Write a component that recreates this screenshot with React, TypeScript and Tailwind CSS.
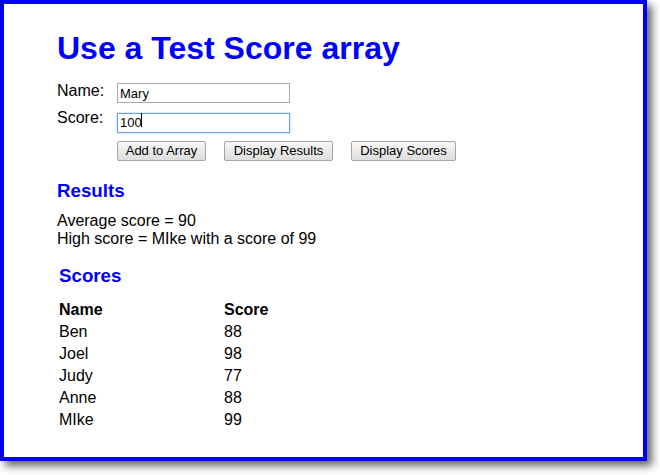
import React from "react";

const rows: [string, number][] = [
  ["Ben", 88],
  ["Joel", 98],
  ["Judy", 77],
  ["Anne", 88],
  ["MIke", 99],
];

function Btn({ label, w }: { label: string; w: string }) {
  return (
    <button
      className={`${w} h-[20px] border border-[#a6a6a6] rounded-[2px] bg-gradient-to-b from-[#f7f7f7] to-[#dddddd] text-[13px] leading-[18px] text-black p-0`}
    >
      {label}
    </button>
  );
}

export default function App() {
  return (
    <div className="w-[660px] h-[475px] bg-white font-['Liberation_Sans',Arial,sans-serif] text-black">
      <div className="w-[647px] h-[461px] border-4 border-[#0000ff] shadow-[5px_5px_8px_rgba(0,0,0,0.6)] pl-[53px] pt-[26px]">
        <h1 className="text-[32px] leading-[37px] font-bold text-[#0000ff]">
          Use a Test Score array
        </h1>

        <div className="mt-[15px] flex items-start">
          <label className="w-[60px] text-[16px] leading-[18px]">Name:</label>
          <input
            readOnly
            value="Mary"
            className="mt-[1px] w-[173px] h-[20px] border border-[#a9a9a9] px-[2px] text-[13px] text-black outline-none"
          />
        </div>
        <div className="mt-[6px] flex items-start">
          <label className="w-[60px] text-[16px] leading-[18px]">Score:</label>
          <div className="relative mt-[1px]">
            <input
              readOnly
              value="100"
              className="w-[173px] h-[20px] border border-[#6f9de8] shadow-[0_0_2px_#9cc0f5] px-[2px] text-[13px] text-black outline-none"
            />
            <span className="absolute left-[24px] top-[3px] w-px h-[14px] bg-black" />
          </div>
        </div>

        <div className="mt-[7px] ml-[60px] flex gap-[18px]">
          <Btn label="Add to Array" w="w-[89px]" />
          <Btn label="Display Results" w="w-[109px]" />
          <Btn label="Display Scores" w="w-[105px]" />
        </div>

        <h3 className="mt-[19px] text-[18.72px] leading-[22px] font-bold text-[#0000ff]">
          Results
        </h3>
        <div className="mt-[10px] text-[16px] leading-[18px]">
          <div>Average score = 90</div>
          <div>High score = MIke with a score of 99</div>
        </div>

        <h3 className="mt-[17px] pl-[2px] text-[18.72px] leading-[22px] font-bold text-[#0000ff]">
          Scores
        </h3>
        <div className="mt-[12px] pl-[2px] text-[16px] leading-[22px]">
          <div className="grid grid-cols-[165px_100px] font-bold">
            <div>Name</div>
            <div>Score</div>
          </div>
          {rows.map(([n, s]) => (
            <div key={n} className="grid grid-cols-[165px_100px]">
              <div>{n}</div>
              <div>{s}</div>
            </div>
          ))}
        </div>
      </div>
    </div>
  );
}
